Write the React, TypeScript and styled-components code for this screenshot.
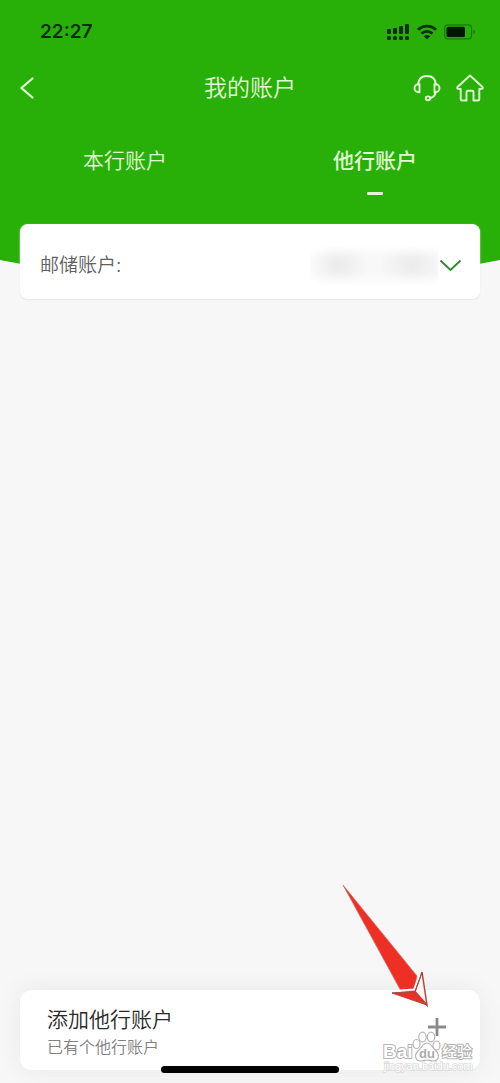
import React from "react";
import styled, { createGlobalStyle, css } from "styled-components";

const GREEN = "#29b008";

const GlobalStyle = createGlobalStyle`
  *, *::before, *::after { box-sizing: border-box; }
  body {
    margin: 0;
    background: #f7f7f7;
    font-family: Inter, "Noto Sans CJK SC", sans-serif;
  }
  button {
    margin: 0;
    padding: 0;
    border: 0;
    background: none;
    font: inherit;
    color: inherit;
    cursor: pointer;
  }
  svg { display: block; }
`;

const Screen = styled.div`
  display: flex;
  flex-direction: column;
  min-height: 100vh;
`;

const Header = styled.header`
  height: 260px;
  background: ${GREEN};
  color: #e0fad4;
`;

const StatusBar = styled.div`
  display: flex;
  align-items: center;
  justify-content: space-between;
  height: 64px;
  padding: 0 24px 0 40px;
  color: #08300a;
`;

const Time = styled.time`
  font-size: 19px;
  font-weight: 600;
  line-height: 24px;
`;

const StatusIcons = styled.div`
  display: flex;
  align-items: center;
  gap: 7px;
`;

const NavBar = styled.nav`
  display: grid;
  grid-template-columns: 1fr auto 1fr;
  align-items: center;
  height: 48px;
  padding: 0 16px;
`;

const BackButton = styled.button`
  justify-self: start;
  padding: 0 4px;
`;

const Title = styled.h1`
  margin: 0;
  font-size: 23px;
  font-weight: 350;
  line-height: 32px;
`;

const NavActions = styled.div`
  display: flex;
  justify-content: flex-end;
  gap: 15px;
`;

const Tabs = styled.div`
  display: flex;
  padding-top: 33px;
`;

const Tab = styled.button<{ $active?: boolean }>`
  flex: 1;
  display: flex;
  flex-direction: column;
  align-items: center;
  gap: 15px;
  height: 50px;
  font-size: 21px;
  font-weight: 350;
  line-height: 32px;
  ${({ $active }) =>
    $active &&
    css`
      font-weight: 500;
      &::after {
        content: "";
        width: 16px;
        height: 3px;
        border-radius: 1px;
        background: #e0fad4;
      }
    `}
`;

const Curve = styled.svg`
  width: 100%;
  height: 25px;
  fill: ${GREEN};
`;

const Main = styled.main`
  flex: 1;
`;

const AccountCard = styled.section`
  position: relative;
  display: flex;
  align-items: center;
  justify-content: space-between;
  height: 75px;
  margin: -61px 20px 0;
  padding: 8px 18px 0 20px;
  border-radius: 8px;
  background: #fff;
  box-shadow: 0 1px 2px #e4e6e4;
`;

const AccountLabel = styled.span`
  color: #606060;
  font-size: 19px;
  font-weight: 350;
  line-height: 28px;
`;

const AccountPicker = styled.button`
  display: flex;
  align-items: center;
  gap: 1px;
`;

const HiddenNumber = styled.span`
  width: 128px;
  height: 42px;
  background:
    radial-gradient(circle at 28px 20px, #ebebeb 0, transparent 32px),
    radial-gradient(circle at 102px 20px, #ebebeb 0, transparent 32px),
    linear-gradient(90deg, #fff, #f8f8f8 20%, #f8f8f8);
  mask-image: linear-gradient(transparent, #000 30%, #000 65%, transparent);
`;

const Footer = styled.footer`
  position: sticky;
  bottom: 0;
  padding: 0 20px 13px;
`;

const AddCard = styled.button`
  display: flex;
  align-items: center;
  justify-content: space-between;
  width: 100%;
  height: 80px;
  padding: 4px 33px 0 27px;
  border-radius: 12px;
  background: #fff;
  box-shadow: 0 0 24px #e8e8e8;
  text-align: left;
`;

const AddText = styled.span`
  display: flex;
  flex-direction: column;
  font-weight: 350;
`;

const AddTitle = styled.span`
  color: #2a2a2a;
  font-size: 21px;
  line-height: 30px;
`;

const AddHint = styled.span`
  color: #808080;
  font-size: 16px;
  line-height: 24px;
`;

const PlusIcon = styled.svg`
  margin-bottom: 10px;
`;

const HomeIndicator = styled.div`
  position: absolute;
  bottom: 10px;
  left: 50%;
  width: 178px;
  height: 7px;
  margin-left: -89px;
  border-radius: 4px;
  background: #000;
`;

const Pointer = styled.svg`
  position: absolute;
  right: 68px;
  bottom: 75px;
  pointer-events: none;
`;

const Watermark = styled.svg`
  position: absolute;
  right: 24px;
  bottom: 6px;
  pointer-events: none;
`;

function SignalIcon() {
  return (
    <svg width="24" height="17" viewBox="0 0 24 17" fill="currentColor" aria-hidden="true">
      <rect x="1" y="5" width="4" height="5" rx="1" />
      <rect x="7" y="4" width="4" height="6" rx="1" />
      <rect x="13" y="2" width="4" height="8" rx="1" />
      <rect x="19" y="0" width="4" height="10" rx="1" />
      <rect x="1" y="12" width="4" height="4" rx="1.5" />
      <rect x="7" y="12" width="4" height="4" rx="1.5" />
      <rect x="13" y="12" width="4" height="4" rx="1.5" />
      <rect x="19" y="12" width="4" height="4" rx="1.5" />
    </svg>
  );
}

function WifiIcon() {
  return (
    <svg width="20" height="16" viewBox="0 0 20 16" fill="none" stroke="currentColor" strokeWidth="2.8" aria-hidden="true">
      <path d="M1 5.8C6 .8 14 .8 19 5.8" />
      <path d="M4.5 9.6c3.2-3 7.8-3 11 0" />
      <path d="M10 15.5l-3.2-3.2c1.9-1.7 4.5-1.7 6.4 0z" fill="currentColor" stroke="none" />
    </svg>
  );
}

function BatteryIcon() {
  return (
    <svg width="32" height="16" viewBox="0 0 32 16" aria-hidden="true">
      <rect x=".6" y=".9" width="27" height="14" rx="3.5" fill="none" stroke="#177a0b" strokeWidth="1.2" />
      <rect x="2.5" y="2.8" width="18.5" height="10.2" rx="1.5" fill="#031604" />
      <path d="M29.5 5.5c2 .8 2 4.2 0 5z" fill="#177a0b" />
    </svg>
  );
}

function HeadsetIcon() {
  return (
    <svg width="28" height="28" viewBox="0 0 28 28" fill="none" stroke="currentColor" strokeWidth="1.9" strokeLinecap="round" aria-hidden="true">
      <path d="M5 10.5C5.500 5 9 2 14 2s8.500 3 9 8.500" />
      <path d="M6.500 10.200v8C3.500 18.500 1.500 17 1.500 14.200s2-4.300 5-4z" strokeLinejoin="round" />
      <path d="M21.500 10.200v8c3 .3 5-1.200 5-4s-2-4.300-5-4z" strokeLinejoin="round" />
      <path d="M22.500 18.500c-.5 3-2.500 5-5.500 5.500" />
      <ellipse cx="15" cy="24.300" rx="2.300" ry="1.900" />
    </svg>
  );
}

function HomeIcon() {
  return (
    <svg width="28" height="28" viewBox="0 0 28 28" fill="none" stroke="currentColor" strokeWidth="1.9" strokeLinejoin="round" strokeLinecap="round" aria-hidden="true">
      <path d="M14 1.500L1.500 13c-.6 1.200 0 1.900 1 1.900h2.200v10.300c0 .9.500 1.300 1.300 1.300h4.500v-8.300c0-.9.500-1.400 1.300-1.400h4.400c.8 0 1.300.5 1.300 1.400v8.300H22c.8 0 1.300-.4 1.300-1.300V14.900h2.200c1 0 1.600-.7 1-1.900z" />
    </svg>
  );
}

export default function App() {
  return (
    <Screen>
      <GlobalStyle />
      <Header>
        <StatusBar>
          <Time>22:27</Time>
          <StatusIcons>
            <SignalIcon />
            <WifiIcon />
            <BatteryIcon />
          </StatusIcons>
        </StatusBar>
        <NavBar>
          <BackButton aria-label="返回">
            <svg width="14" height="22" viewBox="0 0 14 22" fill="none" stroke="currentColor" strokeWidth="2.2" strokeLinecap="round">
              <path d="M12.500 1.500L1.500 11l11 9.500" />
            </svg>
          </BackButton>
          <Title>我的账户</Title>
          <NavActions>
            <button aria-label="客服">
              <HeadsetIcon />
            </button>
            <button aria-label="首页">
              <HomeIcon />
            </button>
          </NavActions>
        </NavBar>
        <Tabs role="tablist">
          <Tab role="tab" aria-selected="false">本行账户</Tab>
          <Tab role="tab" aria-selected="true" $active>他行账户</Tab>
        </Tabs>
      </Header>
      <Curve viewBox="0 0 500 25" preserveAspectRatio="none" aria-hidden="true">
        <path d="M0 0Q250 50 500 0z" />
      </Curve>
      <Main>
        <AccountCard>
          <AccountLabel id="account-label">邮储账户:</AccountLabel>
          <AccountPicker aria-labelledby="account-label" aria-haspopup="listbox">
            <HiddenNumber />
            <svg width="23" height="14" viewBox="0 0 23 14" fill="none" stroke="#2c8a2a" strokeWidth="1.8" aria-hidden="true">
              <path d="M1.500 1.500l10 9.500 10-9.500" />
            </svg>
          </AccountPicker>
        </AccountCard>
      </Main>
      <Footer>
        <AddCard>
          <AddText>
            <AddTitle>添加他行账户</AddTitle>
            <AddHint>已有个他行账户</AddHint>
          </AddText>
          <PlusIcon width="20" height="20" viewBox="0 0 20 20" stroke="#8b8b8b" strokeWidth="2.8" aria-hidden="true">
            <path d="M10 1v18M1 10h18" />
          </PlusIcon>
        </AddCard>
        <HomeIndicator />
        <Pointer width="90" height="124" viewBox="0 0 90 124" aria-hidden="true">
          <path d="M1 1L75 92 72 107 59 107z" fill="#ee2f26" stroke="#c9736c" strokeWidth=".8" />
          <path d="M50 109L73 107.500 85 121z" fill="#ee2f26" stroke="#b8423d" strokeWidth="1" />
          <path d="M73 107.500L80 88 85 121z" fill="#fff4f2" stroke="#b8423d" strokeWidth="1.5" />
          <path d="M52 107L72 105.500 78 90" fill="none" stroke="#fff" strokeWidth="2" />
          <path d="M50 109L73 107.500 80 88" fill="none" stroke="#9f4d4d" strokeWidth="1" />
        </Pointer>
        <Watermark width="94" height="50" viewBox="0 0 94 50" aria-hidden="true">
          <g fill="#fff" stroke="#b4b4b4" strokeWidth="1.2">
            <ellipse cx="34.5" cy="17" rx="3.5" ry="4.5" />
            <ellipse cx="40.5" cy="10" rx="3.7" ry="4.8" />
            <ellipse cx="49" cy="10" rx="3.7" ry="4.8" />
            <ellipse cx="54.5" cy="18.5" rx="3.5" ry="4.5" />
            <path d="M45 16c-4 0-5 4-8 7-5 4-4.500 11 2 11 3 0 4-1 6-1s3 1 6 1c6.500 0 7-7 2-11-3-3-4-7-8-7z" />
          </g>
          <g fill="#fff" stroke="#b4b4b4" strokeWidth="2" paintOrder="stroke">
            <text x="1" y="31" fontFamily="Liberation Sans" fontSize="19" fontWeight="700">Bai</text>
            <text x="60" y="30" fontFamily="Noto Sans CJK SC" fontSize="15" fontWeight="500">经验</text>
          </g>
          <text x="37" y="31" fill="#acacac" fontFamily="Liberation Sans" fontSize="13" fontWeight="700">du</text>
          <text x="2" y="43" fill="#fff" stroke="#dadada" strokeWidth="1.5" paintOrder="stroke" fontFamily="Liberation Sans" fontSize="11">jingyan.baidu.com</text>
        </Watermark>
      </Footer>
    </Screen>
  );
}
